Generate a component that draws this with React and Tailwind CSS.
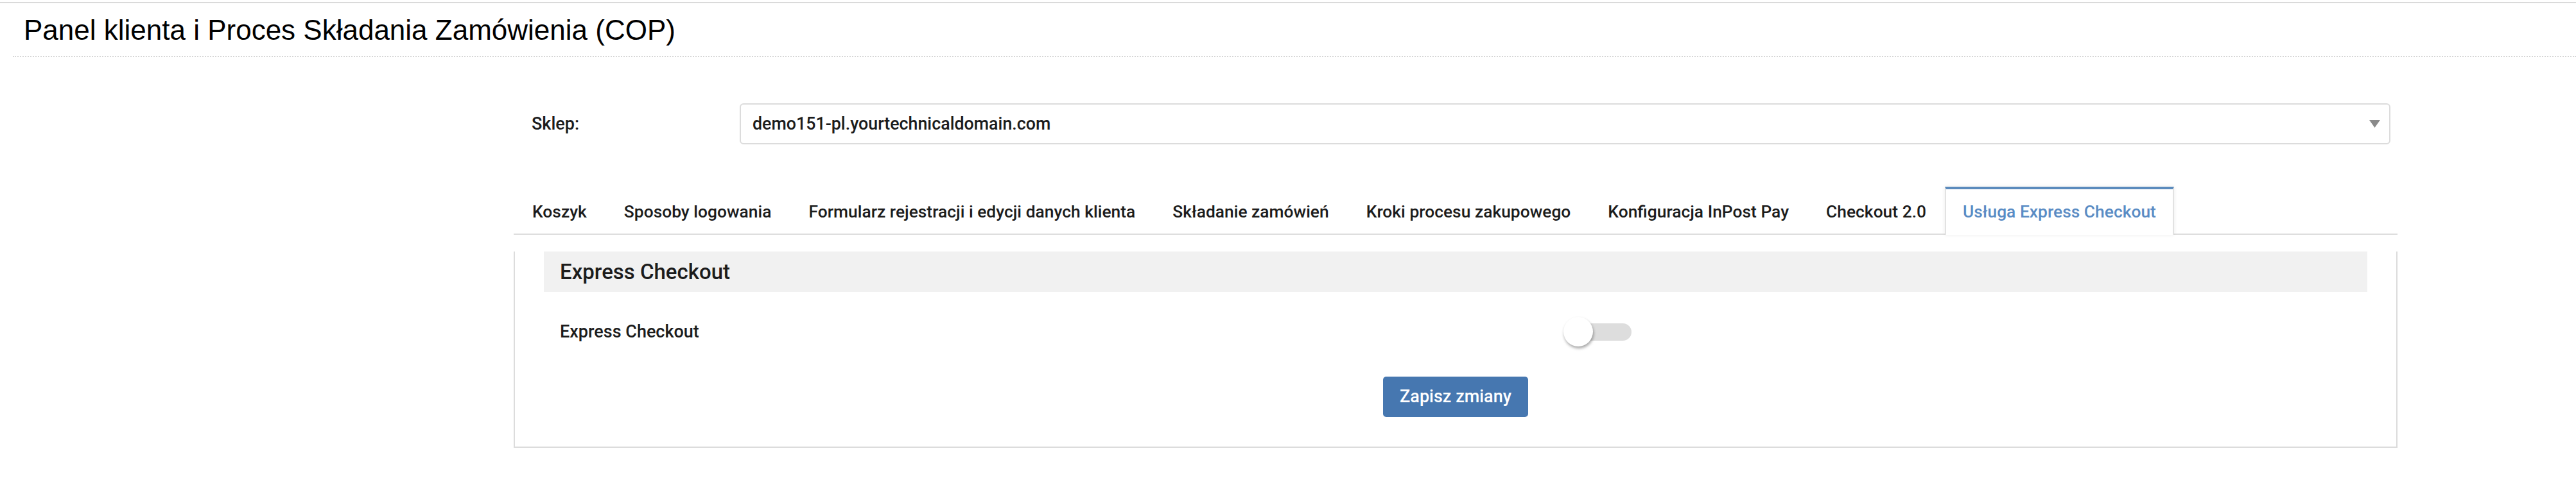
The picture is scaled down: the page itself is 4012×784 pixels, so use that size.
import React, { useState } from 'react';

const tabs = [
  'Koszyk',
  'Sposoby logowania',
  'Formularz rejestracji i edycji danych klienta',
  'Składanie zamówień',
  'Kroki procesu zakupowego',
  'Konfiguracja InPost Pay',
  'Checkout 2.0',
  'Usługa Express Checkout',
];

const App = () => {
  const [activeTab, setActiveTab] = useState('Usługa Express Checkout');
  const [enabled, setEnabled] = useState(false);

  return (
    <div className="min-h-screen bg-white font-['Roboto','Liberation_Sans',sans-serif] text-[#1c1c1c]">
      {/* Top strip */}
      <div className="mt-[3px] border-t-2 border-[#dadada]" />

      {/* Page title */}
      <div className="ml-[20px] mt-[20px] border-b-2 border-dotted border-[#d6d6d6] pb-[19px] pl-[17px]">
        <h1 className="font-['Liberation_Sans',Arial,sans-serif] text-[44px] leading-[43px] font-normal text-black">
          Panel klienta i Proces Składania Zamówienia (COP)
        </h1>
      </div>

      <div className="ml-[800px] w-[2934px]">
        {/* Shop selector */}
        <div className="mt-[72px] flex h-[64px] items-center">
          <label className="w-[352px] pl-[28px] text-[27px] font-medium">Sklep:</label>
          <div className="flex h-[64px] w-[2571px] items-center justify-between rounded-[6px] border-2 border-[#dcdcdc] pl-[18px] pr-[14px]">
            <span className="text-[26.8px] font-medium">demo151-pl.yourtechnicaldomain.com</span>
            <svg width="17" height="12" viewBox="0 0 17 12">
              <path d="M0 0 L17 0 L8.5 12 Z" fill="#8a8a8a" />
            </svg>
          </div>
        </div>

        {/* Tabs */}
        <div className="mt-[66px] flex border-b-2 border-[#dedede]">
          {tabs.map((tab) => {
            const active = tab === activeTab;
            return (
              <button
                key={tab}
                onClick={() => setActiveTab(tab)}
                className={
                  active
                    ? '-mb-[2px] flex h-[75px] items-center whitespace-nowrap border-x-2 border-t-4 border-x-[#e2e2e2] border-t-[#5b8bbd] bg-white px-[26px] text-[26.4px] font-medium text-[#5a8cc4] shadow-[0_0_6px_rgba(0,0,0,0.08)]'
                    : '-mb-[2px] flex h-[75px] items-center whitespace-nowrap border-x-2 border-t-4 border-transparent px-[27px] text-[26.4px] font-medium text-[#1c1c1c]'
                }
              >
                {tab}
              </button>
            );
          })}
        </div>

        {/* Panel */}
        <div className="mt-[26px] border-x-2 border-b-2 border-[#dcdcdc] px-[45px] pb-[46px]">
          <div className="flex h-[63px] items-center bg-[#f1f1f1] pl-[25px]">
            <h2 className="text-[33px] font-medium">Express Checkout</h2>
          </div>

          <div className="mt-[39px] flex h-[46px] items-center pl-[25px]">
            <span className="w-[1563px] text-[27px] font-medium">Express Checkout</span>
            <button
              onClick={() => setEnabled(!enabled)}
              className="relative h-[46px] w-[106px]"
            >
              <span
                className={
                  enabled
                    ? 'absolute left-[24px] top-[10px] h-[27px] w-[82px] rounded-full bg-[#9bbbe0]'
                    : 'absolute left-[24px] top-[10px] h-[27px] w-[82px] rounded-full bg-[#dddddd]'
                }
              />
              <span
                className={
                  enabled
                    ? 'absolute left-[60px] top-0 h-[46px] w-[46px] rounded-full bg-white shadow-[1px_3px_4px_rgba(0,0,0,0.35)]'
                    : 'absolute left-0 top-0 h-[46px] w-[46px] rounded-full bg-white shadow-[1px_3px_4px_rgba(0,0,0,0.35)]'
                }
              />
            </button>
          </div>

          <div className="mt-[47px] flex justify-center">
            <button className="h-[63px] w-[226px] rounded-[5px] bg-[#4677b0] text-[27px] font-medium text-white">
              Zapisz zmiany
            </button>
          </div>
        </div>
      </div>
    </div>
  );
};

export default App;
